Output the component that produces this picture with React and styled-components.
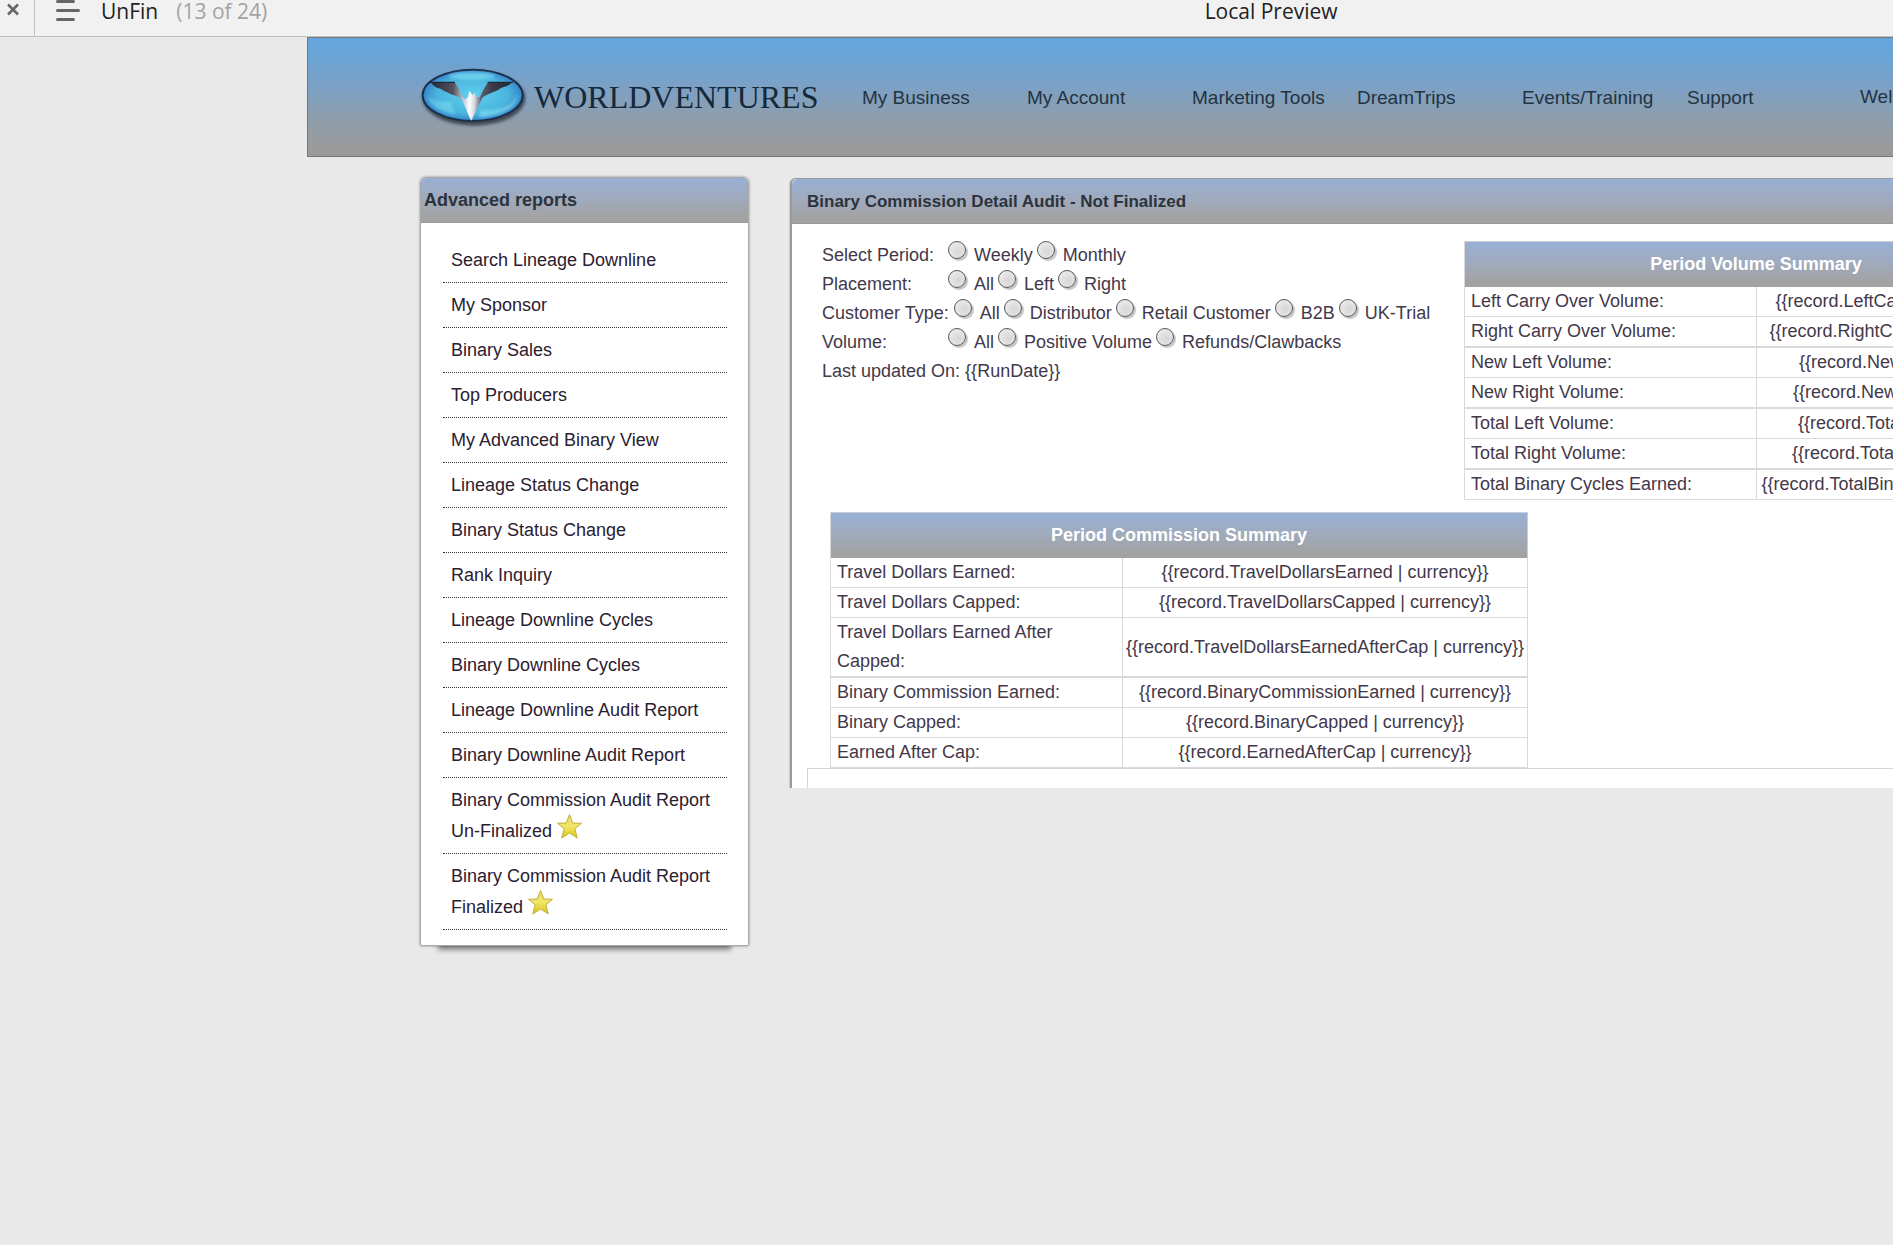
import React from 'react';
import styled, { createGlobalStyle } from 'styled-components';

const GlobalStyle = createGlobalStyle`
    * {
        box-sizing: border-box;
    }

    body {
        margin: 0;
        background: #e9e9e9;
        color: #43384a;
        font-family: "Liberation Sans", Arial, sans-serif;
        font-size: 18px;
        line-height: 29px;
        overflow-x: hidden;
    }
`

const Page = styled.div`
    min-height: 100vh;
    overflow: hidden;
`

// Preview bar
const PreviewBar = styled.div`
    display: grid;
    grid-template-columns: 7fr 4fr;
    height: 37px;
    background: #f1f1f1;
    border-bottom: 1px solid #c2c0be;
    color: #222;
    font-family: "Open Sans", "Noto Sans", sans-serif;
    font-size: 21px;
    line-height: 22px;
    white-space: nowrap;
`

const PreviewLeft = styled.div`
    display: flex;
    align-items: flex-start;
`

const IconButton = styled.button`
    display: block;
    width: ${props => props.width};
    height: 36px;
    padding: 0 0 0 ${props => props.inset};
    border: 0;
    border-right: ${props => props.$divided ? '1px solid #c2c2c2' : '0'};
    background: none;
    text-align: left;

    svg {
        display: block;
        height: 36px;
    }
`

const PageCount = styled.span`
    margin-left: 18px;
    color: #a3a3a3;
`

// Site header
const Header = styled.header`
    display: flex;
    align-items: center;
    height: 120px;
    margin-left: 307px;
    padding-left: 111px;
    border: 1px solid #777;
    border-right: 0;
    background: linear-gradient(#64a5de, #6ca3d2 20%, #7aa1c8 38%, #8c9eae 66%, #9a9b9c 92%, #999);
    overflow: hidden;
`

const Logo = styled.a`
    display: flex;
    flex: 0 0 443px;
    align-items: center;
    color: #15293a;
    font-family: "Liberation Serif", "Times New Roman", serif;
    font-size: 32px;
    line-height: 40px;
    text-decoration: none;

    svg {
        margin-right: 7px;
    }
`

const Nav = styled.nav`
    display: grid;
    grid-template-columns: repeat(6, 165px);
    flex: none;
    font-size: 19px;
`

const NavLink = styled.a`
    color: #23333f;
    text-decoration: none;
    white-space: nowrap;
`

const Welcome = styled.span`
    flex: none;
    margin: 0 0 2px 8px;
    color: #23333f;
    font-size: 19px;
`

// Panels
const Content = styled.main`
    display: flex;
    align-items: flex-start;
    gap: 41px;
    padding: 20px 0 0 420px;
`

const Sidebar = styled.aside`
    flex: 0 0 329px;
    padding-bottom: 15px;
    border: 1px solid #a8a8a8;
    border-radius: 6px 6px 2px 2px;
    background: #fff;
    box-shadow: 0 0 3px rgba(0, 0, 0, 0.4), 0 22px 5px -18px #888;
`

const PanelHeading = styled.h2`
    height: 45px;
    margin: 0;
    padding-left: ${props => props.inset};
    border-bottom: 1px solid #999;
    border-radius: ${props => props.$bleed ? '5px 0 0 0' : '5px 5px 0 0'};
    background: linear-gradient(#98b0d4, #a0aabb 50%, #a2a2a2 90%);
    color: #2d333d;
    font-size: ${props => props.size || '18px'};
    line-height: 45px;
    white-space: nowrap;
`

const ReportList = styled.ul`
    margin: 0 21px 0 22px;
    padding: 15px 0 0;
    list-style: none;

    li {
        padding: 7px 0 6px 8px;
        border-bottom: 1px dotted #333;
        line-height: 31px;
    }

    a {
        color: #2b2030;
        text-decoration: none;
    }

    svg {
        margin-top: -8px;
        vertical-align: -2px;
    }
`

const ReportPanel = styled.section`
    flex: 1;
    min-width: 0;
    margin-top: 1px;
    border: 1px solid #999;
    border-width: 1px 0 0 2px;
    border-radius: 6px 0 0 0;
    background: #fff;
    box-shadow: -1px 0 1px #ccc;
    overflow: hidden;
`

const PanelBody = styled.div`
    padding: 17px 0 0 30px;
`

const TopRow = styled.div`
    display: flex;
    align-items: flex-start;
    margin-bottom: 12px;
`

const Filters = styled.form`
    flex: 0 0 642px;
`

const FilterRow = styled.div`
    display: flex;
    height: 29px;
    white-space: nowrap;
`

const FilterName = styled.span`
    min-width: 126px;
    margin-right: ${props => props.gap || 0};
`

const Option = styled.label`
    display: flex;
    align-items: flex-start;
    margin-right: 4px;
`

const Radio = styled.input`
    appearance: none;
    flex: none;
    width: 18px;
    height: 18px;
    margin: 0 8px 0 0;
    border: 1px solid #555;
    border-radius: 50%;
    background: radial-gradient(circle at 60% 60%, #d6d6d6, #e6e6e6 60%, #fafafa);
    box-shadow: 2px 2px 1px #c4c4c4;
`

const SummaryTable = styled.table`
    flex: none;
    width: ${props => props.width};
    margin-left: ${props => props.inset || 0};
    border-collapse: separate;
    border-spacing: 0;
    border-left: 1px solid #d9d9dc;
    table-layout: fixed;
`

const TableTitle = styled.th`
    height: 46px;
    padding: 0;
    border: 1px solid #c5ced9;
    border-width: 1px 1px 0 0;
    background: linear-gradient(#98b0d4, #a0aabb 50%, #a2a2a2 90%);
    color: #fff;
    line-height: 45px;
    text-align: center;
`

const Row = styled.tr`
    th,
    td {
        padding: 0;
        border: 0 solid #d9d9dc;
        border-right-width: 1px;
        border-bottom-width: ${props => props.$groupEnd ? '2px' : '1px'};
    }

    th {
        padding: 0 20px 0 6px;
        font-weight: normal;
        text-align: left;
    }

    td {
        text-align: center;
        white-space: nowrap;
    }
`

const ResultBox = styled.div`
    height: 20px;
    margin-left: -15px;
    border: 1px solid #d4d4d4;
    border-width: 1px 0 0 1px;
`

const reports = [
    'Search Lineage Downline',
    'My Sponsor',
    'Binary Sales',
    'Top Producers',
    'My Advanced Binary View',
    'Lineage Status Change',
    'Binary Status Change',
    'Rank Inquiry',
    'Lineage Downline Cycles',
    'Binary Downline Cycles',
    'Lineage Downline Audit Report',
    'Binary Downline Audit Report',
];

const starredReports = [
    'Binary Commission Audit Report Un-Finalized',
    'Binary Commission Audit Report Finalized',
];

const navItems = ['My Business', 'My Account', 'Marketing Tools', 'DreamTrips', 'Events/Training', 'Support'];

const filters = [
    { name: 'Select Period:', options: ['Weekly', 'Monthly'] },
    { name: 'Placement:', options: ['All', 'Left', 'Right'] },
    { name: 'Customer Type:', gap: '5px', options: ['All', 'Distributor', 'Retail Customer', 'B2B', 'UK-Trial'] },
    { name: 'Volume:', options: ['All', 'Positive Volume', 'Refunds/Clawbacks'] },
];

const volumeRows = [
    ['Left Carry Over Volume:', '{{record.LeftCarryOverVolume}}'],
    ['Right Carry Over Volume:', '{{record.RightCarryOverVolume}}', true],
    ['New Left Volume:', '{{record.NewLeftVolume}}'],
    ['New Right Volume:', '{{record.NewRightVolume}}', true],
    ['Total Left Volume:', '{{record.TotalLeftVolume}}'],
    ['Total Right Volume:', '{{record.TotalRightVolume}}', true],
    ['Total Binary Cycles Earned:', '{{record.TotalBinaryCyclesEarned}}'],
];

const commissionRows = [
    ['Travel Dollars Earned:', '{{record.TravelDollarsEarned | currency}}'],
    ['Travel Dollars Capped:', '{{record.TravelDollarsCapped | currency}}'],
    ['Travel Dollars Earned After Capped:', '{{record.TravelDollarsEarnedAfterCap | currency}}', true],
    ['Binary Commission Earned:', '{{record.BinaryCommissionEarned | currency}}'],
    ['Binary Capped:', '{{record.BinaryCapped | currency}}'],
    ['Earned After Cap:', '{{record.EarnedAfterCap | currency}}'],
];

const Star = () => (
    <svg width="25" height="25" viewBox="0 0 25 25" aria-hidden="true">
        <defs>
            <linearGradient id="star" x1="0" y1="0" x2="0" y2="1">
                <stop offset="0" stopColor="#e9d962" />
                <stop offset="0.5" stopColor="#f0e66a" />
                <stop offset="1" stopColor="#d9c60f" />
            </linearGradient>
        </defs>
        <path d="M12.5 0.5l3.300 8.500 8.700.3-6.700 5.500 2.500 9.200-7.800-5-7.800 5 2.500-9.200L.5 9.300l8.700-.3z" fill="url(#star)" stroke="#c3ae3c" strokeLinejoin="round" />
    </svg>
);

const Emblem = () => (
    <svg width="108" height="62" viewBox="30 30 324 186" aria-hidden="true">
        <defs>
            <radialGradient id="glass" cx="0.5" cy="0.5" r="0.55">
                <stop offset="0" stopColor="#5fd0ec" />
                <stop offset="0.65" stopColor="#4ab4de" />
                <stop offset="1" stopColor="#2f74c6" />
            </radialGradient>
            <linearGradient id="wing" gradientUnits="userSpaceOnUse" x1="64" y1="90" x2="312" y2="100">
                <stop offset="0" stopColor="#262b35" />
                <stop offset="0.28" stopColor="#53515f" />
                <stop offset="0.4" stopColor="#b9c4d1" />
                <stop offset="0.48" stopColor="#ffffff" />
                <stop offset="0.54" stopColor="#d3dae2" />
                <stop offset="0.62" stopColor="#5c6070" />
                <stop offset="0.75" stopColor="#3a3b47" />
                <stop offset="1" stopColor="#1b2531" />
            </linearGradient>
            <filter id="soft" x="-10%" y="-20%" width="120%" height="150%">
                <feGaussianBlur stdDeviation="5" />
            </filter>
        </defs>
        <ellipse cx="195" cy="127" rx="154" ry="82" fill="#22282f" opacity="0.7" filter="url(#soft)" />
        <ellipse cx="191" cy="118" rx="150" ry="77" fill="url(#glass)" stroke="#1c304c" strokeWidth="6" />
        <ellipse cx="189" cy="60" rx="70" ry="11" fill="#7fe0f2" opacity="0.65" filter="url(#soft)" />
        <path d="M56 118c6 34 38 52 84 58l-14-38c-34 2-56-4-70-20z" fill="#7de2f5" opacity="0.5" filter="url(#soft)" />
        <path d="M214 162c52 4 98-10 112-46 0 40-50 62-116 68z" fill="#8be8f6" opacity="0.6" filter="url(#soft)" />
        <path d="M66 80h72c10 12 18 28 24 44l6 6 8-6 6-20 8 14 8-8 6 12 8 2c8-18 16-32 24-44h72c-10 10-22 13-32 16-10 8-20 10-32 16-12 5-18 8-24 14-12 22-20 44-33 68-13-24-18-46-33-68-8-5-18-8-30-12-10-8-20-8-30-16-12-3-20-7-28-18z" fill="url(#wing)" />
        <path d="M58 79h80M236 79h76" stroke="#1d2a3b" strokeWidth="4" />
    </svg>
);

const Summary = ({ title, rows, width, valueWidth, inset }) => (
    <SummaryTable width={width} inset={inset}>
        <colgroup>
            <col />
            <col width={valueWidth} />
        </colgroup>
        <thead>
            <tr><TableTitle colSpan="2">{title}</TableTitle></tr>
        </thead>
        <tbody>
            {rows.map(([label, value, groupEnd]) => (
                <Row key={label} $groupEnd={groupEnd}>
                    <th scope="row">{label}</th>
                    <td>{value}</td>
                </Row>
            ))}
        </tbody>
    </SummaryTable>
);

export default class App extends React.Component {
    render() {
        return (
            <Page>
                <GlobalStyle />
                <PreviewBar>
                    <PreviewLeft>
                        <IconButton width="35px" inset="6px" $divided aria-label="Close">
                            <svg width="16" viewBox="0 0 16 36">
                                <path d="M2 4.500l10 10M12 4.500l-10 10" stroke="#666" strokeWidth="2.500" />
                            </svg>
                        </IconButton>
                        <IconButton width="66px" inset="21px" aria-label="Pages">
                            <svg width="26" viewBox="0 0 26 36">
                                <path d="M1.500 1.500h16M1.500 10.500h21M1.500 19.500h16" stroke="#666" strokeWidth="3" strokeLinecap="round" />
                            </svg>
                        </IconButton>
                        <span>UnFin</span>
                        <PageCount>(13 of 24)</PageCount>
                    </PreviewLeft>
                    <span>Local Preview</span>
                </PreviewBar>

                <Header>
                    <Logo href="#">
                        <Emblem />
                        WORLDVENTURES
                    </Logo>
                    <Nav>
                        {navItems.map(item => <NavLink href="#" key={item}>{item}</NavLink>)}
                    </Nav>
                    <Welcome>Welcome</Welcome>
                </Header>

                <Content>
                    <Sidebar>
                        <PanelHeading inset="3px">Advanced reports</PanelHeading>
                        <ReportList>
                            {reports.map(report => (
                                <li key={report}><a href="#">{report}</a></li>
                            ))}
                            {starredReports.map(report => (
                                <li key={report}><a href="#">{report} <Star /></a></li>
                            ))}
                        </ReportList>
                    </Sidebar>

                    <ReportPanel>
                        <PanelHeading inset="15px" size="17px" $bleed>Binary Commission Detail Audit - Not Finalized</PanelHeading>
                        <PanelBody>
                            <TopRow>
                                <Filters>
                                    {filters.map(({ name, gap, options }) => (
                                        <FilterRow key={name} role="radiogroup" aria-label={name}>
                                            <FilterName gap={gap}>{name}</FilterName>
                                            {options.map(option => (
                                                <Option key={option}>
                                                    <Radio type="radio" name={name} value={option} />
                                                    {option}
                                                </Option>
                                            ))}
                                        </FilterRow>
                                    ))}
                                    <FilterRow>{'Last updated On: {{RunDate}}'}</FilterRow>
                                </Filters>
                                <Summary title="Period Volume Summary" rows={volumeRows} width="584px" valueWidth="291" />
                            </TopRow>
                            <Summary title="Period Commission Summary" rows={commissionRows} width="698px" valueWidth="405" inset="8px" />
                            <ResultBox />
                        </PanelBody>
                    </ReportPanel>
                </Content>
            </Page>
        );
    }
}
